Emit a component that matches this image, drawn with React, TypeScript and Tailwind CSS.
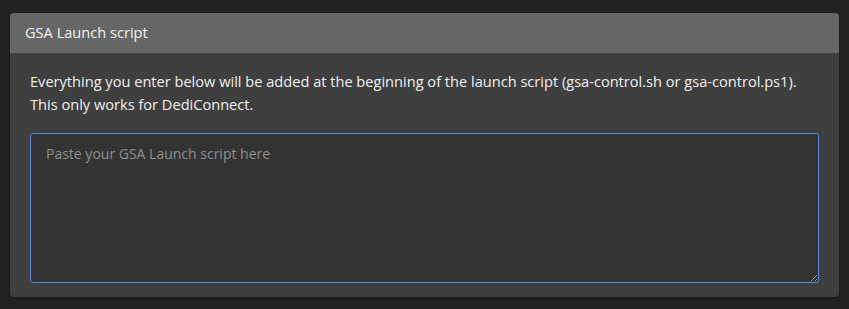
import React from "react";

export default function App() {
  return (
    <div className="min-h-[309px] w-full bg-[#222222] pt-[13px] px-[10px] pb-[12px]" style={{ fontFamily: '"Open Sans", sans-serif' }}>
      <div className="rounded-[4px] overflow-hidden bg-[#3f3f3f] shadow-[0_1px_3px_rgba(0,0,0,0.4)]">
        <div className="h-[40px] bg-[#666666] flex items-center px-[15px] text-[14.6px] text-[#f2f2f2]">
          GSA Launch script
        </div>
        <div className="px-[20px] pt-[17px] pb-[14px]">
          <p className="text-[14.6px] leading-[23px] text-[#f0f0f0] mb-[17px]">
            Everything you enter below will be added at the beginning of the launch script (gsa-control.sh or gsa-control.ps1). This only works for DediConnect.
          </p>
          <textarea
            className="block w-full h-[150px] rounded-[3px] border border-[#5a8ad6] bg-[#333333] px-[15px] py-[10px] text-[14px] leading-[20px] text-[#eeeeee] placeholder:text-[#8f8f8f] outline-none"
            placeholder="Paste your GSA Launch script here"
            style={{ fontFamily: '"Open Sans", sans-serif' }}
          />
        </div>
      </div>
    </div>
  );
}
